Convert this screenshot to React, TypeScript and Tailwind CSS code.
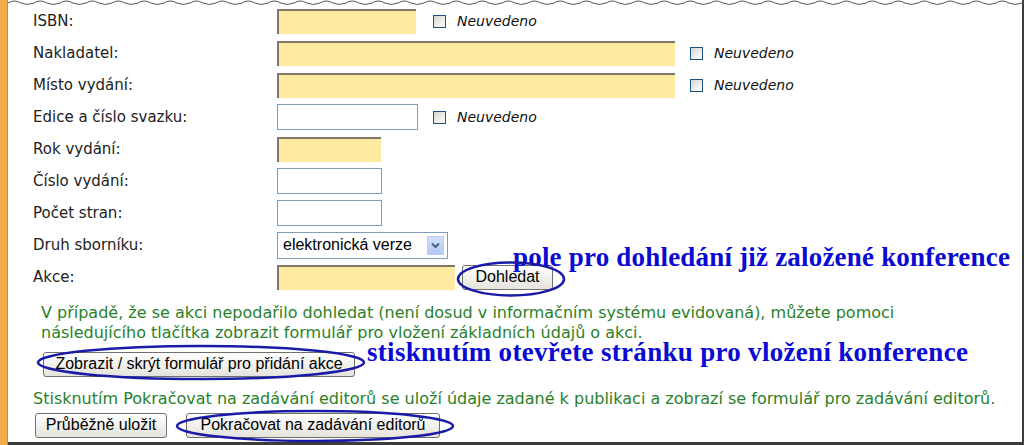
import React from "react";

const verdana = "font-['DejaVu_Sans',Verdana,sans-serif]";
const arial = "font-['Liberation_Sans',Arial,sans-serif]";
const times = "font-['Liberation_Serif','Times_New_Roman',serif]";

function wavePath() {
  let d = "M8 3";
  for (let x = 8; x < 1024; x += 26) {
    d += ` Q${x + 6} -1 ${x + 13} 3 Q${x + 19} 6 ${x + 26} 3`;
  }
  return d;
}

function YellowInput({ w }: { w: string }) {
  return <div className={`${w} h-[25px] bg-[#feeb9f] border-t-2 border-l-2 border-[#7d776b]`} />;
}

function WhiteInput({ w }: { w: string }) {
  return <div className={`${w} h-[26px] bg-white border border-[#7f9db9]`} />;
}

function Neuvedeno({ ml }: { ml: string }) {
  return (
    <div className={`flex items-center ${ml}`}>
      <span className="w-[13px] h-[13px] border border-[#1c5180] bg-gradient-to-br from-[#d6d6d0] to-white" />
      <span className={`ml-[11px] italic text-[14px] text-[#111] ${verdana}`}>Neuvedeno</span>
    </div>
  );
}

function Row({ label, children }: { label: string; children: React.ReactNode }) {
  return (
    <div className="h-[32px] flex items-center">
      <span className={`w-[244px] text-[15px] text-[#222] ${verdana}`}>{label}</span>
      {children}
    </div>
  );
}

function XpButton({ children, w }: { children: React.ReactNode; w: string }) {
  return (
    <button
      className={`${w} h-[25px] rounded-[3px] border border-[#6f6f6f] bg-gradient-to-b from-white to-[#e4e3dc] text-[16px] text-black leading-none ${arial}`}
    >
      {children}
    </button>
  );
}

export default function App() {
  return (
    <div className="relative w-[1024px] h-[445px] bg-white overflow-hidden flex">
      <div className="w-[8px] bg-[#f2ab45] border-r border-[#c98a2b]" />

      <div className="flex-1 flex flex-col pt-[5px] pl-[25px] border-r-2 border-b-[3px] border-[#3c3c3c]">
        <Row label="ISBN:">
          <YellowInput w="w-[139px]" />
          <Neuvedeno ml="ml-[17px]" />
        </Row>
        <Row label="Nakladatel:">
          <YellowInput w="w-[398px]" />
          <Neuvedeno ml="ml-[15px]" />
        </Row>
        <Row label="Místo vydání:">
          <YellowInput w="w-[398px]" />
          <Neuvedeno ml="ml-[15px]" />
        </Row>
        <Row label="Edice a číslo svazku:">
          <WhiteInput w="w-[141px]" />
          <Neuvedeno ml="ml-[15px]" />
        </Row>
        <Row label="Rok vydání:">
          <YellowInput w="w-[104px]" />
        </Row>
        <Row label="Číslo vydání:">
          <WhiteInput w="w-[105px]" />
        </Row>
        <Row label="Počet stran:">
          <WhiteInput w="w-[105px]" />
        </Row>
        <Row label="Druh sborníku:">
          <div className="w-[171px] h-[27px] border border-[#7f9db9] bg-white flex items-center pl-[5px] pr-[3px]">
            <span className={`flex-1 text-[16px] text-black ${arial}`}>elektronická verze</span>
            <span className="w-[17px] h-[19px] bg-gradient-to-b from-[#d4e1fb] to-[#b3c8f5] border border-[#b9cbf3] flex items-center justify-center">
              <svg width="9" height="7" viewBox="0 0 9 7">
                <path d="M1 1.5 L4.5 5 L8 1.5" stroke="#4d6185" strokeWidth="2" fill="none" />
              </svg>
            </span>
          </div>
        </Row>
        <Row label="Akce:">
          <YellowInput w="w-[178px]" />
          <div className="ml-[7px]">
            <XpButton w="w-[91px]">Dohledat</XpButton>
          </div>
        </Row>

        <p className={`mt-[10px] pl-[8px] text-[16px] leading-[20px] text-[#2a7f2a] ${verdana}`}>
          V případě, že se akci nepodařilo dohledat (není dosud v informačním systému evidovaná), můžete pomoci
          <br />
          následujícího tlačítka zobrazit formulář pro vložení základních údajů o akci.
        </p>
        <div className="mt-[8px] pl-[10px]">
          <XpButton w="w-[312px]">Zobrazit / skrýt formulář pro přidání akce</XpButton>
        </div>

        <p className={`mt-[12px] text-[16px] leading-[20px] text-[#2a7f2a] ${verdana}`}>
          Stisknutím Pokračovat na zadávání editorů se uloží údaje zadané k publikaci a zobrazí se formulář pro zadávání editorů.
        </p>
        <div className="mt-[4px] pl-[2px] flex gap-[19px]">
          <XpButton w="w-[132px]">Průběžně uložit</XpButton>
          <XpButton w="w-[254px]">Pokračovat na zadávání editorů</XpButton>
        </div>
      </div>

      {/* torn top edge */}
      <svg className="absolute top-0 left-0" width="1024" height="7">
        <path d={wavePath()} stroke="#555" strokeWidth="1" fill="none" />
      </svg>

      {/* annotations */}
      <span className={`absolute left-[513px] top-[244px] text-[27px] tracking-[0.2px] leading-none font-bold text-[#0a0ad2] ${times}`}>
        pole pro dohledání již založené konference
      </span>
      <span className={`absolute left-[367px] top-[339px] text-[27px] tracking-[0.3px] leading-none font-bold text-[#0a0ad2] ${times}`}>
        stisknutím otevřete stránku pro vložení konference
      </span>
      <svg className="absolute left-0 top-0 pointer-events-none" width="1024" height="445">
        <ellipse cx="511" cy="279" rx="53" ry="16.5" stroke="#1a1aa8" strokeWidth="2.5" fill="none" />
        <ellipse cx="201" cy="362.5" rx="163" ry="16.5" stroke="#1a1aa8" strokeWidth="2.5" fill="none" />
        <ellipse cx="315" cy="426" rx="138" ry="15" stroke="#1a1aa8" strokeWidth="2.5" fill="none" />
      </svg>
    </div>
  );
}
